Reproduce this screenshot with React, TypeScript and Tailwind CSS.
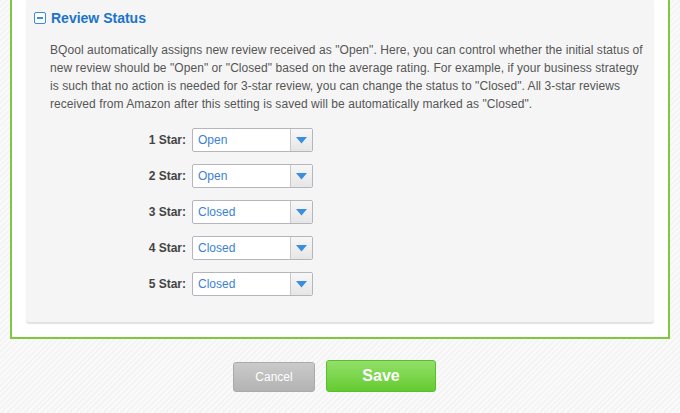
import { useState } from 'react';

const stars = [
  { label: '1 Star:', value: 'Open' },
  { label: '2 Star:', value: 'Open' },
  { label: '3 Star:', value: 'Closed' },
  { label: '4 Star:', value: 'Closed' },
  { label: '5 Star:', value: 'Closed' },
];

function StatusSelect({ value }: { value: string }) {
  return (
    <div className="flex h-[24px] w-[121px] items-stretch overflow-hidden rounded-[2px] border border-[#b5b5bd] bg-white">
      <span className="flex flex-1 items-center pl-[5px] text-[12px] text-[#3d7fd6]">{value}</span>
      <span className="flex w-[22px] items-center justify-center border-l border-[#c8c8c8] bg-[linear-gradient(#f7f7f7,#e6e6e6)]">
        <svg width="11" height="7" viewBox="0 0 11 7">
          <path d="M0 0h11L5.5 6.5z" fill="#3a8ee0" />
        </svg>
      </span>
    </div>
  );
}

export default function App() {
  const [open] = useState(true);

  return (
    <div
      className="flex h-[413px] w-[680px] flex-col overflow-hidden bg-[repeating-linear-gradient(135deg,#f4f4f4_0px,#f4f4f4_2px,#fafafa_2px,#fafafa_4px)] text-[#555]"
      style={{ fontFamily: '"Liberation Sans", Arial, sans-serif' }}
    >
      <div className="mx-[10px] border-x-2 border-b-2 border-[#7dc83c] bg-white px-[14px] pb-[15px]">
        <div className="rounded-b-[3px] bg-[#f5f5f5] pb-[26px] pl-[24px] pr-[5px] shadow-[0_2px_1px_#e2e2e2]">
          <div className="-ml-[16px] flex h-[35px] items-center gap-[5px] pt-[1px]">
            <span className="flex h-[12px] w-[12px] items-center justify-center rounded-[2px] border border-[#3d8be0] bg-white">
              <span className="h-[2px] w-[6px] bg-[#3d8be0]" />
            </span>
            <h2 className="text-[14px] font-bold text-[#1c74c8]">Review Status</h2>
          </div>
          <p className="mt-[6px] text-[12px] leading-[18px] tracking-[0.06px] text-[#555]">
            BQool automatically assigns new review received as "Open". Here, you can control whether the initial status of new review should be "Open" or "Closed" based on the average rating. For example, if your business strategy is such that no action is needed for 3-star review, you can change the status to "Closed". All 3-star reviews received from Amazon after this setting is saved will be automatically marked as "Closed".
          </p>
          {open && (
            <div className="mt-[15px] flex flex-col gap-[12px]">
              {stars.map((s) => (
                <div key={s.label} className="flex items-center">
                  <span className="w-[142px] pr-[6px] text-right text-[12px] font-bold text-[#444]">{s.label}</span>
                  <StatusSelect value={s.value} />
                </div>
              ))}
            </div>
          )}
        </div>
      </div>
      <div className="mt-[21px] flex items-center justify-center gap-[11px] pr-[11px]">
        <button className="mt-[2px] h-[30px] w-[82px] rounded-[3px] border border-[#aaa] bg-[linear-gradient(#cacaca,#b3b3b3)] text-[12px] text-white">
          Cancel
        </button>
        <button className="h-[32px] w-[110px] rounded-[3px] border border-[#5cbc2c] bg-[linear-gradient(#92e06a,#64cb30)] text-[16px] font-bold text-white">
          Save
        </button>
      </div>
    </div>
  );
}
